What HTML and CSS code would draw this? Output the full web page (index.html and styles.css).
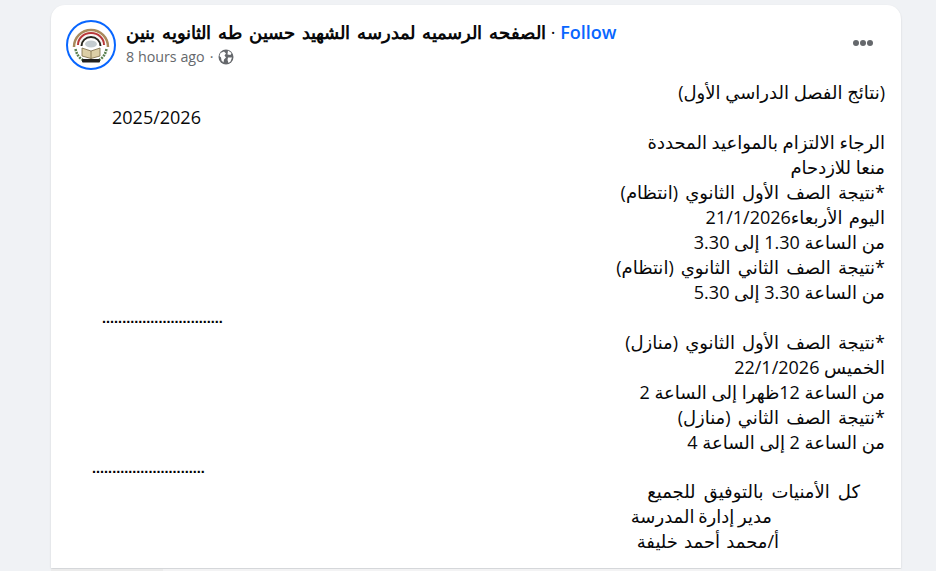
FILE: index.html
```html
<!DOCTYPE html>
<html lang="ar">
<head>
<meta charset="utf-8">
<title>Post</title>
<link rel="stylesheet" href="styles.css">
</head>
<body>
<main class="card">
  <header class="head">
    <svg class="avatar" viewBox="0 0 50 50" aria-hidden="true">
      <circle cx="25" cy="25" r="24" fill="#fff" stroke="#0866ff" stroke-width="2"/>
      <g fill="none">
        <path d="M8 27A17 17 0 0 1 42 27" stroke="#a98a5c" stroke-width="2.500"/>
        <path d="M11 25A14 13 0 0 1 39 25" stroke="#f0e6d2" stroke-width="1"/>
        <path d="M12 25A13 12 0 0 1 38 25" stroke="#b8383a" stroke-width="2"/>
        <path d="M14 25A11 10 0 0 1 36 25" stroke="#f4f2ee" stroke-width="1"/>
        <path d="M15.500 26A9.500 9 0 0 1 34.500 26" stroke="#27261f" stroke-width="2"/>
        <path d="M9.500 29C10.500 34 13 38 17 40" stroke="#5b8050" stroke-width="2.500" stroke-dasharray="2 1"/>
        <path d="M40.500 29C39.500 34 37 38 33 40" stroke="#5b8050" stroke-width="2.500" stroke-dasharray="2 1"/>
      </g>
      <ellipse cx="25" cy="24" rx="6" ry="3.500" fill="#c4ccd0"/>
      <path d="M16 28L25 31L34 28L34 36L25 38.500L16 36Z" fill="#dccfa6" stroke="#7a6a45" stroke-width=".8"/>
      <path d="M25 31V38.500" stroke="#7a6a45" stroke-width=".8"/>
      <rect x="16" y="39" width="18" height="3.500" rx="1" fill="#22221f"/>
    </svg>
    <div class="meta">
      <div class="title"><span class="name" dir="rtl">الصفحه الرسميه لمدرسه الشهيد حسين طه الثانويه بنين</span><span class="dot"> · </span><a class="follow">Follow</a></div>
      <div class="sub"><span>8 hours ago</span><span class="sep">·</span>
        <svg class="globe" viewBox="0 0 16 16" aria-hidden="true">
          <circle cx="8" cy="8" r="7.500" fill="#65686c"/>
          <path d="M2.500 4L6 2.500L8 4.500L6.500 6.500L8 8.500L6 10.500L5.500 13.500L3.500 11.500L3 8.500L1.500 7ZM10 1.500L13.500 4L12.500 6L9.500 5.500ZM10 8.500L14 8.500L12.500 12.500L10.500 14L9.500 11Z" fill="#fff"/>
        </svg>
      </div>
    </div>
    <div class="more" aria-label="More"><i></i><i></i><i></i></div>
  </header>
  <article class="body" dir="rtl">
    <p>(نتائج الفصل الدراسي الأول)</p>
    <p class="far year" dir="ltr">2025/2026</p>
    <p>الرجاء الالتزام بالمواعيد المحددة</p>
    <p>منعا للازدحام</p>
    <p class="wide">*نتيجة الصف الأول الثانوي (انتظام)</p>
    <p class="wide-s">اليوم الأربعاء21/1/2026</p>
    <p>من الساعة 1.30 إلى 3.30</p>
    <p class="wide">*نتيجة الصف الثاني الثانوي (انتظام)</p>
    <p>من الساعة 3.30 إلى 5.30</p>
    <p class="far dots dots-a" dir="ltr">..............................</p>
    <p class="wide">*نتيجة الصف الأول الثانوي (منازل)</p>
    <p>الخميس 22/1/2026</p>
    <p>من الساعة 12ظهرا إلى الساعة 2</p>
    <p class="wide">*نتيجة الصف الثاني (منازل)</p>
    <p>من الساعة 2 إلى الساعة 4</p>
    <p class="far dots dots-b" dir="ltr">............................</p>
    <p class="in-a">كل الأمنيات بالتوفيق للجميع</p>
    <p class="in-b">مدير إدارة المدرسة</p>
    <p class="in-c wide-s">أ/محمد أحمد خليفة</p>
  </article>
</main>
<div class="below"><i></i></div>
</body>
</html>
```
FILE: styles.css
```css
* { box-sizing: border-box; }
html, body { height: 100%; }
body {
  margin: 0;
  padding: 5px 35px 0 51px;
  background: #f0f2f5;
  overflow: hidden;
  font-family: "Open Sans", "Liberation Sans", "Noto Sans", sans-serif;
  color: #080809;
}
.card {
  height: 563px;
  background: #fff;
  border-radius: 14px 14px 0 0;
  box-shadow: 0 1px 2px rgba(0, 0, 0, .15);
  padding: 15px 15px 0;
}
.below { height: 2px; margin-top: 1px; background: #f3f3f4; }
.below i { display: block; width: 112px; height: 2px; background: #ebebeb; }
.head { display: flex; align-items: flex-start; }
.avatar { width: 50px; height: 50px; flex: none; }
.meta { margin-left: 10px; flex: 1; }
.title { font-size: 18px; font-weight: 600; line-height: 24px; height: 24px; white-space: nowrap; display: flex; }
.name { font-size: 18.170px; word-spacing: 2.300px; }
.dot { white-space: pre; font-weight: 400; }
.follow { color: #0866ff; }
.sub { display: flex; align-items: center; font-size: 14.300px; line-height: 25px; color: #65686c; }
.sep { margin: 0 5px; }
.globe { width: 16px; height: 16px; }
.more { display: flex; gap: 1px; margin: 20px 13px 0 0; }
.more i { width: 6px; height: 6px; border-radius: 50%; background: #65686c; }
.body { padding: 10px 1px 0 0; font-size: 18px; font-family: "Open Sans", "Liberation Sans", "DejaVu Sans", sans-serif; }
.body p { margin: 0; height: 25px; line-height: 25px; white-space: nowrap; }
.wide { word-spacing: 2.400px; }
.wide-s { word-spacing: 1.500px; }
.far { text-align: left; }
.year { padding-left: 46px; }
.dots { padding-top: 1px; font-size: 14.500px; font-weight: 700; font-family: "Liberation Sans", sans-serif; color: #000; }
.dots-a { padding-left: 36px; }
.dots-b { padding-left: 26px; }
.body .in-a { padding-right: 25px; margin-top: -1px; word-spacing: 3.400px; }
.in-b { padding-right: 113px; word-spacing: -1px; }
.in-c { padding-right: 106px; }
```
